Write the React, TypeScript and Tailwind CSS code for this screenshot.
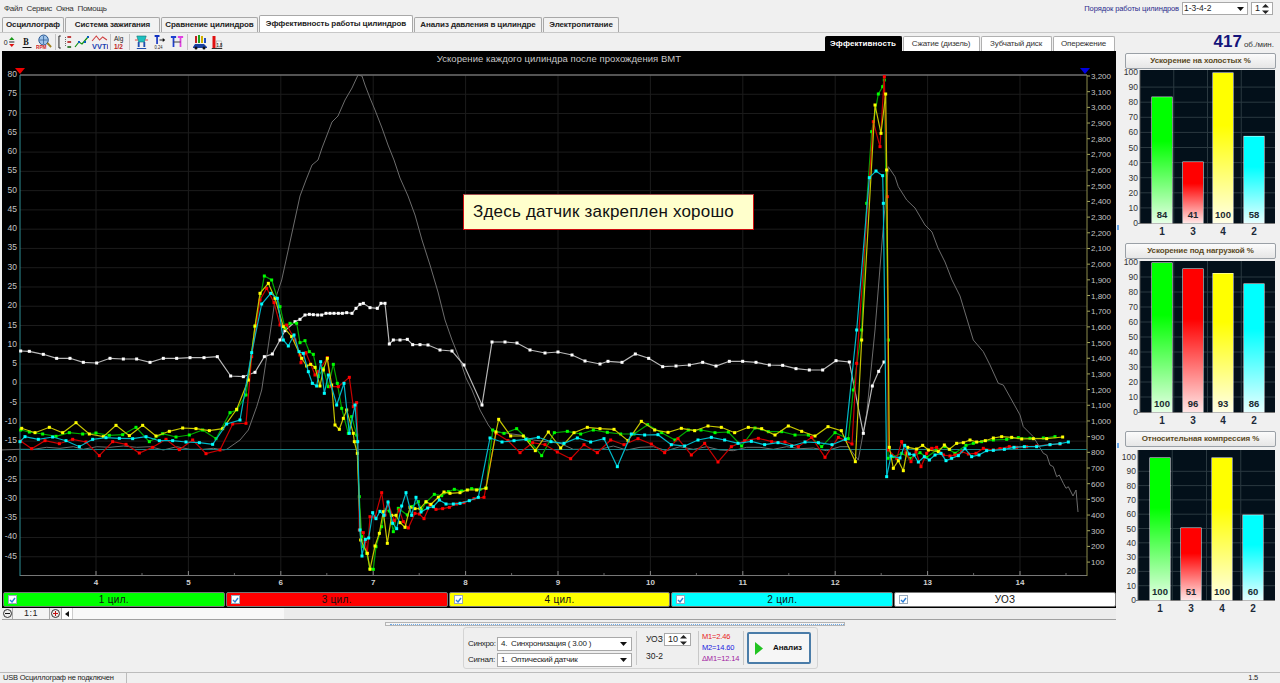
import type { ReactNode } from "react"

type Pt = [number, number]

// coordinates were read off zoomed crops, so each chunk has its own origin
const crop = (ox: number, oy: number, z: number[]): Pt[] => {
  const out: Pt[] = []
  for (let i = 0; i < z.length; i += 2) out.push([ox + z[i] / 3, oy + z[i + 1] / 3])
  return out
}

const green = [
  ...crop(0, 340, [62,270,88,276,128,282,168,289,208,278,248,282,288,279,328,286,368,284,408,262,448,305,488,281,528,291,568,285,608,270,648,296]),
  ...crop(220, 260, [30,458,50,450,78,405,105,200,133,48,155,60,180,140,195,205,210,190,230,190,240,248,255,242,268,275,280,283,295,350,310,325,325,380,340,313,352,370,365,445,385,520,395,470,410,525]),
  ...crop(350, 410, [28,260,35,380,40,410,50,430,60,475,70,478,78,410,95,350,105,300,118,303,130,365,145,295,172,315,185,290,205,275,215,300,228,277,253,253,275,257,295,245,313,238,335,243,365,236,390,238,408,233,428,60,462,70,500,56,538,92,575,137,613,68,652,64,692,72,730,60]),
  ...crop(600, 330, [22,307,62,312,102,312,143,284,185,308,225,330,265,300,303,300,345,308,385,306,425,348,465,294,505,305,545,305,585,315,625,315,665,350,705,308,745,326,760,180,785,0]),
  ...crop(830, 70, [110,400,125,185,145,72,158,50,163,30]),
  ...crop(830, 340, [175,0,174,355,190,350,215,340,240,355,270,338,290,352,320,330,345,320,375,340,408,316,430,310,455,305,490,300,530,298,565,293,600,295,640,294,675,290]),
]

const yellow = [
  ...crop(0, 340, [65,265,105,278,148,262,188,278,228,248,268,282,310,290,348,256,388,287,428,256,468,288,508,274,548,264,588,266,628,272,668,266]),
  ...crop(220, 260, [50,448,85,360,105,198,120,100,145,70,165,115,190,200,215,230,245,295,260,318,272,313,285,322,300,378,310,330,322,295,335,375,345,495,358,508,370,475,380,450,400,520,403,545]),
  ...crop(350, 410, [22,130,32,390,52,430,60,478,75,408,88,370,100,305,112,400,125,316,138,316,150,338,165,352,180,292,195,296,210,296,228,275,243,283,265,262,282,246,300,250,330,248,352,240,380,240,408,235,438,66,446,28,482,78,520,78,556,122,595,66,632,114,672,68,712,52,750,56]),
  ...crop(600, 330, [42,298,84,332,124,274,164,300,204,307,244,295,284,302,324,288,364,292,404,308,445,292,485,296,525,315,565,288,605,304,645,318,684,290,724,302,766,395,785,30]),
  ...crop(830, 70, [135,105,153,190,167,72,170,300]),
  ...crop(830, 340, [178,322,190,385,205,362,220,392,233,322,260,327,278,316,295,330,325,335,343,315,358,328,380,310,400,308,420,300,440,306,466,302,490,294,515,290,545,292,575,297,610,296,650,296,698,291]),
]

const red = [
  ...crop(0, 340, [62,303,95,326,135,302,178,311,218,298,258,306,298,347,338,305,378,313,418,339,458,322,498,298,538,329,578,300,618,341,660,330]),
  ...crop(220, 260, [38,492,78,490,95,290,120,120,140,85,162,128,180,195,200,195,225,240,240,285,243,308,258,278,285,345,295,335,322,293,332,380,355,380,388,352,400,440,410,428,413,545]),
  ...crop(350, 410, [28,360,40,368,45,395,52,430,60,320,75,322,95,248,105,315,115,280,133,332,148,300,160,335,175,354,195,310,208,312,222,326,240,285,258,298,278,296,298,292,320,282,342,278,372,266,402,262,438,70,474,92,510,128,548,98,585,104,622,126,662,146,702,104,742,128]),
  ...crop(600, 330, [32,330,72,344,114,326,154,342,194,368,234,326,274,375,314,340,354,396,394,350,434,332,475,325,515,335,555,336,595,350,635,322,675,382,715,322,756,342,770,100]),
  ...crop(830, 70, [130,155,150,230,163,20,172,380]),
  ...crop(830, 340, [175,330,200,355,215,305,228,340,243,365,258,335,273,380,290,340,305,325,320,322,340,345,360,348,375,345,395,335,415,342,438,340,460,325,490,330,510,326,538,320,560,322,590,320,620,318,660,314,690,312]),
]

const cyan = [
  ...crop(0, 340, [60,305,75,290,115,298,158,291,198,302,238,320,278,298,318,293,358,295,398,296,438,290,478,302,518,302,558,306,598,308,638,313]),
  ...crop(220, 260, [20,492,60,480,95,278,125,132,152,100,172,115,190,240,205,258,222,225,237,275,250,280,265,335,277,370,290,378,302,305,313,400,325,345,350,435,372,370,388,520,405,435,413,545]),
  ...crop(350, 410, [30,360,36,438,46,388,56,384,68,308,78,326,90,304,102,316,114,276,128,340,140,356,155,288,168,248,185,316,198,262,213,306,233,294,250,290,268,270,288,282,310,282,330,280,358,272,385,262,420,84,456,96,492,92,528,88,565,82,603,95,642,100,682,84,722,96]),
  ...crop(600, 330, [12,326,52,410,94,312,134,315,174,314,214,344,254,348,294,330,334,322,374,330,414,340,454,334,494,344,534,338,575,348,615,336,655,338,696,344,736,328,770,0]),
  ...crop(830, 70, [118,323,138,303,158,317,160,400]),
  ...crop(830, 340, [170,410,183,348,210,354,224,316,238,342,252,345,265,366,283,350,298,360,315,345,333,340,348,362,365,355,385,347,405,326,425,350,447,345,470,332,490,331,523,328,552,322,583,320,620,320,660,314,690,311,715,306]),
]

const white = [
  ...crop(0, 340, [62,33,88,34,130,43,170,55,210,55,250,67,290,69,330,55,370,57,410,57,450,67,490,55,530,55,570,53,612,53,652,50]),
  ...crop(220, 260, [32,348,70,350,105,337,133,290,157,282,180,240,195,212,225,185,240,178,255,165,268,163,280,164,293,165,305,165,318,160,330,160,342,160,355,160,367,160,380,158,396,160,408,145,420,133,430,130,450,143,472,145,483,130,495,130,508,252,520,240,540,240,562,238,578,254,600,254]),
  [428,345],[440,350],[452,351],[464,365],[482,405],[492,342],[505,342],[517,343],[530,350],[545,353],[558,352],[572,355],[585,361],
  ...crop(600, 330, [0,102,24,94,66,97,106,72,146,85,188,110,228,108,268,105,308,97,348,108,388,94,428,94,468,97,508,105,548,106,588,116,628,120,668,120,708,92,748,96,790,310,817,168,836,124]),
  [884,362],
] as Pt[]

// engine rpm trace, no markers
const rpm = [
  ...crop(0, 340, [0,330,60,328,100,328,140,322,180,325,220,320,250,328,290,320,330,322,370,318,410,322,450,320,490,330,530,320,570,328,610,328,640,325,670,330]),
  ...crop(220, 260, [20,568,60,540,85,510,110,440,125,390,140,290,165,120,185,60]),
  [300,196],[306,180],[312,165],[318,160],[322,148],[332,122],[338,116],[345,100],[352,88],[358,75],[362,76],[365,85],[370,98],[375,110],[382,128],[388,145],[394,160],[400,178],[408,196],[415,215],[422,240],[430,265],[438,292],[445,320],[452,340],[460,360],[466,378],[472,390],[480,410],
  ...crop(350, 410, [415,45,430,65,470,70,510,75,550,90,590,95,630,100,670,118,710,118,750,118]),
  ...crop(600, 330, [40,348,80,360,120,352,160,350,200,362,240,350,280,358,320,350,360,360,400,362,440,352,480,352,520,358,560,350,600,356,640,354,680,362,720,350,745,350,775,390,800,250,825,0]),
  [883,230],
  ...crop(830, 70, [175,290,195,320,205,350,230,390]),
  [915,208],[925,225],[932,232],[938,248],[945,262],[952,280],[960,296],
  ...crop(830, 340, [430,0,460,35,480,75,505,130,520,135,545,180,570,225,580,260,610,290,640,340,650,345,660,375,670,380,680,410,688,405,700,430,708,445,715,440]),
  [1073,496],[1076,490],[1078,512],
] as Pt[]

const line = (p: Pt[]) => p.map(([x, y]) => `${x.toFixed(1)},${y.toFixed(1)}`).join(" ")

const leftLabels = Array.from({ length: 26 }, (_, i) => 80 - i * 5)
const rightLabels = Array.from({ length: 32 }, (_, i) => 3200 - i * 100)
const xLabels = [4, 5, 6, 7, 8, 9, 10, 11, 12, 13, 14]

const rpmY = (v: number) => 76 + ((3200 - v) / 100) * 15.68
const degY = (v: number) => 74.5 + ((80 - v) / 5) * 19.27
const stepX = (v: number) => 96 + (v - 4) * 92.4

function Trace({ pts, stroke, dot }: { pts: Pt[]; stroke: string; dot: string }) {
  return (
    <g>
      <polyline points={line(pts)} fill="none" stroke={stroke} strokeWidth="1.2" />
      {pts.map(([x, y], i) => (
        <rect key={i} x={x - 1.5} y={y - 1.5} width="3" height="3" fill={dot} />
      ))}
    </g>
  )
}

function MainChart() {
  return (
    <svg viewBox="2 51 1114 541" width="1114" height="541" className="block">
      <rect x="2" y="51" width="1114" height="541" fill="#000" />
      <text x="559" y="62" textAnchor="middle" fontSize="9.5" fill="#c8c8c8" letterSpacing="0.05" fontFamily="Liberation Sans">
        Ускорение каждого цилиндра после прохождения ВМТ
      </text>
      {leftLabels.map((v) => (
        <g key={v}>
          <line x1="20" x2="1087" y1={degY(v) + 0.5} y2={degY(v) + 0.5} stroke="#1c1c1c" />
          <text x="17" y={degY(v) + 2.5} textAnchor="end" fontSize="8.5" fill="#c4c4c4" fontFamily="Liberation Sans">{v}</text>
        </g>
      ))}
      {xLabels.map((v) => (
        <g key={v}>
          <line x1={stepX(v)} x2={stepX(v)} y1="75" y2="575" stroke="#1c1c1c" />
          <line x1={stepX(v)} x2={stepX(v)} y1="571" y2="575" stroke="#888" />
          <line x1={stepX(v) + 46} x2={stepX(v) + 46} y1="573" y2="575" stroke="#666" />
          <text x={stepX(v)} y="585" textAnchor="middle" fontSize="8" fontWeight="bold" fill="#d0d0d0" fontFamily="Liberation Sans">{v}</text>
        </g>
      ))}
      {rightLabels.map((v) => (
        <g key={v}>
          <line x1="1087" x2="1090" y1={rpmY(v)} y2={rpmY(v)} stroke="#a8a860" />
          <text x="1091" y={rpmY(v) + 3} fontSize="8" fill="#c4c4c4" fontFamily="Liberation Sans">{v.toLocaleString("en-US")}</text>
        </g>
      ))}
      <line x1="20" x2="1087" y1="75" y2="75" stroke="#9a9a9a" />
      <line x1="20" x2="1087" y1="575.5" y2="575.5" stroke="#777" />
      <line x1="20" x2="20" y1="75" y2="576" stroke="#2f8f96" />
      <line x1="1087" x2="1087" y1="75" y2="576" stroke="#8c8c4c" />
      <polyline points={line(rpm)} fill="none" stroke="#6c6c6c" strokeWidth="1" />
      <line x1="20" x2="1087" y1="449.5" y2="449.5" stroke="#1a8084" />
      <polygon points="15,68 25,68 20,74" fill="#f00000" />
      <polygon points="1080,68 1090,68 1085,74" fill="#0000e0" />
      <Trace pts={white} stroke="#b8b8b8" dot="#ffffff" />
      <Trace pts={green} stroke="#00a800" dot="#00ff00" />
      <Trace pts={red} stroke="#c80000" dot="#ff0000" />
      <Trace pts={yellow} stroke="#c4c400" dot="#ffff00" />
      <Trace pts={cyan} stroke="#00b8c8" dot="#00ffff" />
    </svg>
  )
}

type Bar = { label: string; value: number; color: string }

function BarChart({ id, bars, plotX, barX, top, y100, y0, height }: { id: string; bars: Bar[]; plotX: number; barX: number[]; top: number; y100: number; y0: number; height: number }) {
  const k = (y0 - y100) / 100
  return (
    <svg viewBox={`0 -3 156 ${height + 3}`} width="156" height={height + 3} className="-mt-[3px] block">
      <defs>
        {bars.map((b) => (
          <linearGradient key={b.label} id={`${id}-${b.label}`} x1="0" y1="0" x2="0" y2="1">
            <stop offset="0.35" stopColor={b.color} />
            <stop offset="1" stopColor={b.color} stopOpacity="0.1" />
          </linearGradient>
        ))}
      </defs>
      <rect x={plotX} y={top} width={153 - plotX} height={y0 - top} fill="#03101a" />
      {[90, 80, 70, 60, 50, 40, 30, 20, 10].map((v) => (
        <line key={v} x1={plotX} x2="153" y1={y0 - v * k} y2={y0 - v * k} stroke="#2b3940" />
      ))}
      {[0.25, 0.5, 0.75].map((f) => (
        <line key={f} x1={plotX + (153 - plotX) * f} x2={plotX + (153 - plotX) * f} y1={top} y2={y0} stroke="#2b3940" />
      ))}
      <line x1={plotX - 2} x2="153" y1={y0 + 0.5} y2={y0 + 0.5} stroke="#777" />
      <line x1={plotX} x2={plotX} y1={top} y2={y0} stroke="#555" />
      {[100, 90, 80, 70, 60, 50, 40, 30, 20, 10, 0].map((v) => (
        <text key={v} x={plotX - 2} y={y0 - v * k + 3} textAnchor="end" fontSize="8.5" fill="#333" fontFamily="Liberation Sans">{v}</text>
      ))}
      {bars.map((b, i) => (
        <g key={b.label}>
          <rect x={barX[i] + 0.5} y={y0 - b.value * k + 0.5} width="21" height={b.value * k} fill="#fff" />
          <rect x={barX[i] + 1} y={y0 - b.value * k + 1} width="20" height={b.value * k - 1} fill={`url(#${id}-${b.label})`} />
          <text x={barX[i] + 11} y={y0 - 5} textAnchor="middle" fontSize="9.5" fontWeight="bold" fill="#1a2a30" fontFamily="Liberation Sans">{b.value}</text>
          <text x={barX[i] + 11} y={y0 + 12} textAnchor="middle" fontSize="10" fontWeight="bold" fill="#1c2a38" fontFamily="Liberation Sans">{b.label}</text>
        </g>
      ))}
    </svg>
  )
}

function PanelTitle({ children }: { children: ReactNode }) {
  return (
    <div className="relative z-10 mx-[3px] flex h-[16px] w-[151px] items-center justify-center whitespace-nowrap rounded-[2px] border border-[#9aa0a6] bg-gradient-to-b from-[#fbfbfb] to-[#e6e6e6] text-[8px] font-bold tracking-[-0.1px] text-[#5a4a1e]">
      {children}
    </div>
  )
}

function Caret() {
  return (
    <svg width="7" height="4" viewBox="0 0 7 4" className="shrink-0">
      <polygon points="0,0 7,0 3.5,4" fill="#111" />
    </svg>
  )
}

function Spin() {
  return (
    <svg width="7" height="10" viewBox="0 0 7 10" className="shrink-0">
      <polygon points="3.5,0 7,3.5 0,3.5" fill="#222" />
      <polygon points="0,6.5 7,6.5 3.5,10" fill="#222" />
    </svg>
  )
}

function Select({ text, w }: { text: string; w: string }) {
  return (
    <div className={`flex h-[14px] items-center justify-between border border-[#a9a9a9] bg-white pl-[3px] pr-[4px] text-[8px] tracking-[-0.25px] text-[#222] ${w}`}>
      <span className="whitespace-pre">{text}</span>
      <Caret />
    </div>
  )
}

function LegendItem({ label, bg }: { label: string; bg: string }) {
  return (
    <div className={`relative flex h-[15px] flex-1 items-center justify-center rounded-[2px] border border-[#777] text-[10px] tracking-[0.3px] text-[#111] ${bg}`}>
      <span className="absolute left-[4px] top-[2px] flex h-[9px] w-[9px] items-center justify-center border border-[#9ab] bg-white">
        <svg width="7" height="6" viewBox="0 0 7 6"><polyline points="1,3 3,5 6,1" fill="none" stroke="#2a7fd8" strokeWidth="1.4" /></svg>
      </span>
      {label}
    </div>
  )
}

function TopTab({ label, w, active }: { label: string; w: string; active?: boolean }) {
  return (
    <div className={`flex items-center justify-center whitespace-nowrap rounded-t-[2px] border border-b-0 border-[#a8a8a8] text-[8px] font-bold tracking-[-0.1px] text-[#222] ${w} ${active ? "-mt-[2px] h-[17px] bg-white" : "h-[15px] bg-[#f2f2f2]"}`}>
      {label}
    </div>
  )
}

function SubTab({ label, w, active }: { label: string; w: string; active?: boolean }) {
  return (
    <div className={`flex h-[15px] items-center justify-center whitespace-nowrap rounded-t-[2px] border border-b-0 text-[8px] ${w} ${active ? "border-black bg-black font-bold tracking-[0.1px] text-white" : "border-[#b0b0b0] bg-white tracking-[-0.2px] text-[#333]"}`}>
      {label}
    </div>
  )
}

function ToolIcon({ children, w, vb = 16, className = "" }: { children: ReactNode; w: number; vb?: number; className?: string }) {
  return (
    <svg width={w} height="16" viewBox={`0 0 ${vb} 16`} preserveAspectRatio="none" className={`shrink-0 ${className}`}>
      {children}
    </svg>
  )
}

function Sep({ className }: { className: string }) {
  return <div className={`h-[16px] w-px shrink-0 bg-[#c4c4c4] ${className}`} />
}

function Toolbar() {
  return (
    <div className="flex items-center pl-[3px]">
      <ToolIcon w={14}>
        <text x="1" y="11" fontSize="8" fill="#222" fontFamily="Liberation Sans">0</text>
        <polygon points="10,3 13,6 7,6" fill="#1a9a1a" />
        <rect x="7" y="7.5" width="6" height="1" fill="#222" />
        <polygon points="7,10 13,10 10,13" fill="#e01010" />
      </ToolIcon>
      <ToolIcon w={12} className="ml-[4px]">
        <text x="3" y="11" fontSize="11" fontWeight="bold" fill="#111" fontFamily="Liberation Serif">B</text>
        <rect x="2" y="13" width="12" height="1" fill="#111" />
      </ToolIcon>
      <ToolIcon w={17} vb={18} className="ml-[3px]">
        <circle cx="8" cy="6" r="5" fill="#9fc4ea" stroke="#22518c" />
        <path d="M4 6h8M8 2v8" stroke="#22518c" strokeWidth="0.7" />
        <path d="M12 9l4 4" stroke="#a08020" strokeWidth="2" />
        <text x="0" y="15.5" fontSize="5" fontWeight="bold" fill="#d02020" fontFamily="Liberation Sans">RPM</text>
      </ToolIcon>
      <Sep className="mx-[2px]" />
      <ToolIcon w={15}>
        <path d="M3 2H1v12h2" fill="none" stroke="#222" />
        <path d="M8 3v10" stroke="#666" strokeDasharray="1 1" />
        <rect x="10" y="2" width="4" height="2" fill="#c04040" />
        <rect x="10" y="7" width="4" height="2" fill="#c04040" />
        <rect x="10" y="12" width="4" height="2" fill="#408040" />
      </ToolIcon>
      <ToolIcon w={16} className="ml-[1px]">
        <polyline points="1,13 5,8 8,10 14,3" fill="none" stroke="#109010" strokeWidth="1.2" />
        <rect x="4" y="7" width="2" height="2" fill="#0a5fc0" />
        <rect x="10" y="7" width="2" height="2" fill="#0a5fc0" />
        <rect x="13" y="2" width="2" height="2" fill="#0a5fc0" />
      </ToolIcon>
      <ToolIcon w={17} className="ml-[1px]">
        <polyline points="1,7 5,2 8,6 11,3 15,6" fill="none" stroke="#d04040" />
        <text x="1" y="15" fontSize="7" fontWeight="bold" fill="#2040b0" fontFamily="Liberation Sans">VVTi</text>
      </ToolIcon>
      <Sep className="mx-[2px]" />
      <ToolIcon w={13} vb={14}>
        <text x="1" y="7" fontSize="7" fill="#222" fontFamily="Liberation Sans">Alg</text>
        <text x="1" y="15" fontSize="7" fontWeight="bold" fill="#c02020" fontFamily="Liberation Sans">1/2</text>
      </ToolIcon>
      <Sep className="mx-[3px]" />
      <ToolIcon w={15} className="ml-[1px]">
        <polygon points="3,2 13,2 11,8 5,8" fill="#20c0c0" stroke="#107070" strokeWidth="0.6" />
        <path d="M1 6h3M12 6h3" stroke="#e04040" />
        <rect x="4" y="8" width="2" height="5" fill="#2050b0" />
        <rect x="10" y="8" width="2" height="5" fill="#2050b0" />
        <rect x="3" y="14" width="10" height="1" fill="#2050b0" />
      </ToolIcon>
      <ToolIcon w={13} className="ml-[4px]">
        <path d="M2 2h6M5 2v8" stroke="#1030c0" strokeWidth="2" />
        <path d="M8 6h5" stroke="#111" />
        <polygon points="12,4 15,6 12,8" fill="#111" />
        <text x="2" y="15.5" fontSize="5" fill="#222" fontFamily="Liberation Sans">0.24</text>
      </ToolIcon>
      <ToolIcon w={14} className="ml-[4px]">
        <path d="M1 3h6M4 3v10" stroke="#2040d0" strokeWidth="2" />
        <path d="M9 3h6M12 3v10" stroke="#e040e0" strokeWidth="2" />
        <path d="M4 8h8" stroke="#333" />
      </ToolIcon>
      <Sep className="mx-[3px]" />
      <ToolIcon w={16} className="ml-[1px]">
        <rect x="3" y="2" width="2" height="7" fill="#c02020" />
        <rect x="6" y="1" width="2" height="8" fill="#20a020" />
        <rect x="9" y="2" width="2" height="7" fill="#d0b000" />
        <rect x="12" y="4" width="2" height="5" fill="#2050c0" />
        <path d="M1 13l2-3h9l3 3v1H1z" fill="#1840a0" />
        <circle cx="4" cy="14" r="1.5" fill="#111" />
        <circle cx="12" cy="14" r="1.5" fill="#111" />
      </ToolIcon>
      <ToolIcon w={12} className="ml-[3px]">
        <rect x="2" y="2" width="4" height="12" fill="#e01010" />
        <rect x="7" y="7" width="7" height="7" fill="#f4f4f4" stroke="#888" strokeWidth="0.5" />
        <text x="7.5" y="13" fontSize="5.5" fontWeight="bold" fill="#222" fontFamily="Liberation Sans">1.8</text>
        <rect x="1" y="14" width="14" height="1" fill="#333" />
      </ToolIcon>
    </div>
  )
}

const idle: Bar[] = [
  { label: "1", value: 84, color: "#00ff00" },
  { label: "3", value: 41, color: "#ff0000" },
  { label: "4", value: 100, color: "#ffff00" },
  { label: "2", value: 58, color: "#00ffff" },
]
const load: Bar[] = [
  { label: "1", value: 100, color: "#00ff00" },
  { label: "3", value: 96, color: "#ff0000" },
  { label: "4", value: 93, color: "#ffff00" },
  { label: "2", value: 86, color: "#00ffff" },
]
const comp: Bar[] = [
  { label: "1", value: 100, color: "#00ff00" },
  { label: "3", value: 51, color: "#ff0000" },
  { label: "4", value: 100, color: "#ffff00" },
  { label: "2", value: 60, color: "#00ffff" },
]

export default function App() {
  return (
    <div className="flex h-[683px] w-[1280px] flex-col overflow-hidden bg-[#f0f0f0] font-['Liberation_Sans',sans-serif] text-[#222]">
      {/* menu */}
      <div className="flex h-[17px] shrink-0 items-center justify-between pl-[4px] pr-[7px]">
        <div className="flex gap-[4px] text-[8px] tracking-[-0.3px] text-[#333]">
          <span>Файл</span>
          <span>Сервис</span>
          <span>Окна</span>
          <span>Помощь</span>
        </div>
        <div className="flex items-center gap-[3px]">
          <span className="text-[7.5px] tracking-[-0.1px] text-[#2a2a8c]">Порядок работы цилиндров</span>
          <div className="flex h-[13px] w-[66px] items-center justify-between border border-[#a9a9a9] bg-white pl-[1px] pr-[3px] text-[8.5px]">
            <span>1-3-4-2</span>
            <Caret />
          </div>
          <div className="flex h-[13px] w-[22px] items-center justify-between border border-[#a9a9a9] bg-white px-[3px] text-[9px]">
            <span>1</span>
            <Spin />
          </div>
        </div>
      </div>
      {/* tabs */}
      <div className="flex h-[15px] shrink-0 items-end gap-[1px] pl-[2px]">
        <TopTab label="Осциллограф" w="w-[62px]" />
        <TopTab label="Система зажигания" w="w-[95px]" />
        <TopTab label="Сравнение цилиндров" w="w-[97px]" />
        <TopTab label="Эффективность работы цилиндров" w="w-[154px]" active />
        <TopTab label="Анализ давления в цилиндре" w="w-[128px]" />
        <TopTab label="Электропитание" w="w-[76px]" />
      </div>
      {/* toolbar */}
      <div className="flex h-[19px] shrink-0 items-center justify-between border-t border-[#c8c8c8] pr-[6px]">
        <Toolbar />
        <div className="flex items-end">
          <div className="mr-[99px] flex h-[18px] items-end gap-[1px]">
            <SubTab label="Эффективность" w="w-[77px]" active />
            <SubTab label="Сжатие (дизель)" w="w-[77px]" />
            <SubTab label="Зубчатый диск" w="w-[71px]" />
            <SubTab label="Опережение" w="w-[62px]" />
          </div>
          <div className="flex items-baseline gap-[2px]">
            <span className="text-[17px] font-bold leading-[18px] text-[#14147a]">417</span>
            <span className="text-[8px] text-[#333]">об./мин.</span>
          </div>
        </div>
      </div>
      {/* main */}
      <div className="flex min-h-0 flex-1">
        <div className="flex w-[1122px] shrink-0 flex-col pl-[2px]">
          <div className="relative w-[1114px]">
            <MainChart />
            <div className="absolute left-[461px] top-[143px] flex h-[36px] w-[291px] items-center whitespace-nowrap border border-[#d01010] border-t-[#a05050] bg-[#ffffcc] pl-[9px] text-[17px] tracking-[0.2px] text-[#111]">
              Здесь датчик закреплен хорошо
            </div>
            <div className="absolute left-[1115px] top-[174px] h-[5px] w-[2px] bg-[#6aa8e8]" />
            <div className="absolute left-[1115px] top-[392px] h-[5px] w-[2px] bg-[#6aa8e8]" />
          </div>
          <div className="flex h-[16px] w-[1114px] shrink-0 gap-[1px] bg-black pb-[1px] pl-[1px]">
            <LegendItem label="1 цил." bg="bg-[#00ff00]" />
            <LegendItem label="3 цил." bg="bg-[#ff0000]" />
            <LegendItem label="4 цил." bg="bg-[#ffff00]" />
            <LegendItem label="2 цил." bg="bg-[#00ffff]" />
            <LegendItem label="УОЗ" bg="bg-white" />
          </div>
          <div className="flex h-[12px] w-[1114px] shrink-0 items-stretch border-b border-[#a0a0a0] bg-[#ececec]">
            <div className="flex w-[11px] items-center justify-center border-r border-[#aaa]">
              <span className="flex h-[9px] w-[9px] items-center justify-center rounded-full border border-[#333]"><span className="h-px w-[5px] bg-[#111]" /></span>
            </div>
            <div className="flex w-[37px] items-center justify-center border-r border-[#aaa] bg-[#f4f4f4] text-[9px] tracking-[0.5px]">1:1</div>
            <div className="flex w-[12px] items-center justify-center border-r border-[#aaa]">
              <span className="relative flex h-[9px] w-[9px] items-center justify-center rounded-full border border-[#333]"><span className="h-px w-[5px] bg-[#c01010]" /><span className="absolute h-[5px] w-px bg-[#c01010]" /></span>
            </div>
            <div className="flex w-[11px] items-center justify-center border-r border-[#ccc] bg-white">
              <svg width="4" height="6" viewBox="0 0 4 6"><polygon points="4,0 4,6 0,3" fill="#111" /></svg>
            </div>
            <div className="w-[211px] bg-[#f8f8f8]" />
            <div className="flex-1" />
          </div>
          {/* splitter + controls */}
          <div className="flex flex-1 flex-col">
            <div className="ml-[383px] mt-[2px] flex h-[4px] w-[460px] items-center border border-[#b4b4b4] bg-[#f4f4f4] pl-[4px]">
              <div className="w-full border-t border-dotted border-[#6aa8e8]" />
            </div>
            <div className="ml-[461px] mt-[1px] flex h-[42px] w-[355px] items-center rounded-[3px] border border-[#d4d4d4] bg-[#efefef] pl-[4px]">
              <div className="mt-[7px] flex w-[167px] flex-col gap-[2px]">
                <div className="flex items-center gap-[2px]">
                  <span className="w-[27px] whitespace-nowrap text-[8px] tracking-[-0.3px]">Синхро:</span>
                  <Select text="4.  Синхронизация ( 3.00 )" w="w-[135px]" />
                </div>
                <div className="flex items-center gap-[2px]">
                  <span className="w-[27px] whitespace-nowrap text-[8px] tracking-[-0.3px]">Сигнал:</span>
                  <Select text="1.  Оптический датчик" w="w-[135px]" />
                </div>
              </div>
              <div className="ml-[1px] h-[34px] w-px bg-[#c8c8c8]" />
              <div className="flex w-[61px] flex-col gap-[4px] pl-[9px] text-[8.5px]">
                <div className="flex items-center gap-[1px]">
                  <span>УОЗ</span>
                  <div className="flex h-[13px] w-[27px] items-center justify-between border border-[#a9a9a9] bg-white px-[3px] text-[9px]">
                    <span>10</span>
                    <Spin />
                  </div>
                </div>
                <span>30-2</span>
              </div>
              <div className="h-[34px] w-px bg-[#c8c8c8]" />
              <div className="flex w-[44px] flex-col gap-[1.5px] pl-[3px] text-[7.5px] leading-[9.5px] tracking-[-0.15px]">
                <span className="text-[#e82020]">M1=2.46</span>
                <span className="text-[#2020e0]">M2=14.60</span>
                <span className="text-[#a020a0]">ΔM1=12.14</span>
              </div>
              <div className="h-[34px] w-px bg-[#c8c8c8]" />
              <div className="ml-[3px] flex h-[32px] w-[64px] items-center rounded-[2px] border-2 border-[#4a7ca8] bg-[#f6f6f6] pl-[6px]">
                <svg width="8" height="13" viewBox="0 0 8 13" className="shrink-0"><polygon points="0,0 8,6.5 0,13" fill="#22c422" /></svg>
                <span className="ml-[10px] text-[8px] font-bold text-[#111]">Анализ</span>
              </div>
            </div>
          </div>
        </div>
        <div className="flex w-[158px] shrink-0 flex-col pt-[2px]">
          <PanelTitle>Ускорение на холостых %</PanelTitle>
          <BarChart id="a" bars={idle} plotX={18} barX={[29, 60, 90, 121]} top={1} y100={3} y0={154} height={172} />
          <div className="h-[2px]" />
          <PanelTitle>Ускорение под нагрузкой %</PanelTitle>
          <BarChart id="b" bars={load} plotX={18} barX={[29, 60, 90, 121]} top={2} y100={3} y0={153} height={172} />
          <PanelTitle>Относительная компрессия %</PanelTitle>
          <BarChart id="c" bars={comp} plotX={16} barX={[27, 58, 89, 120]} top={3} y100={10} y0={153} height={170} />
        </div>
      </div>
      {/* status */}
      <div className="flex h-[11px] shrink-0 items-center border-t border-[#bcbcbc] text-[7.5px] leading-[10px] tracking-[-0.2px] text-[#222]">
        <div className="w-[127px] whitespace-nowrap border-r border-[#bcbcbc] pl-[3px]">USB Осциллограф не подключен</div>
        <div className="flex-1 pr-[22px] text-right">1.5</div>
      </div>
    </div>
  )
}
